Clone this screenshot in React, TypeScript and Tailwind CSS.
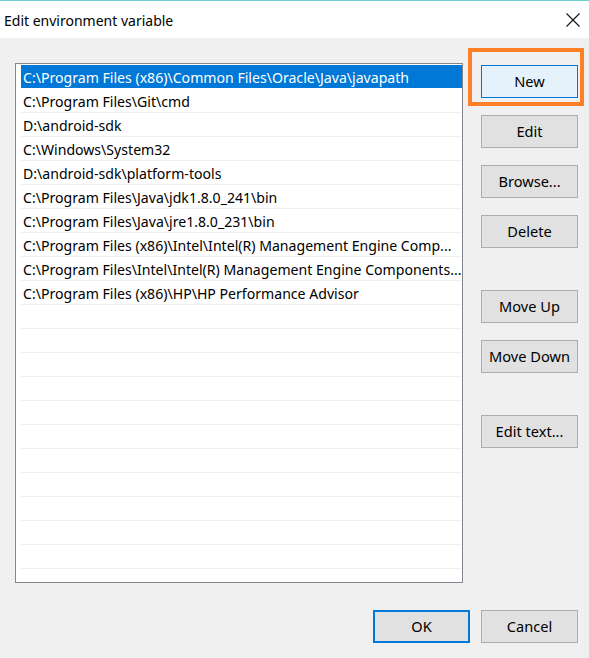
const paths = [
  'C:\\Program Files (x86)\\Common Files\\Oracle\\Java\\javapath',
  'C:\\Program Files\\Git\\cmd',
  'D:\\android-sdk',
  'C:\\Windows\\System32',
  'D:\\android-sdk\\platform-tools',
  'C:\\Program Files\\Java\\jdk1.8.0_241\\bin',
  'C:\\Program Files\\Java\\jre1.8.0_231\\bin',
  'C:\\Program Files (x86)\\Intel\\Intel(R) Management Engine Comp...',
  'C:\\Program Files\\Intel\\Intel(R) Management Engine Components...',
  'C:\\Program Files (x86)\\HP\\HP Performance Advisor',
];

const rows = [...paths, ...Array(12).fill('')];

function Btn({ label, className = '' }: { label: string; className?: string }) {
  return (
    <button
      className={`w-[97px] h-[33px] border border-[#adadad] bg-[#e1e1e1] text-[14.6px] text-black ${className}`}
    >
      {label}
    </button>
  );
}

export default function App() {
  return (
    <div
      className="w-[589px] h-[658px] bg-[#f0f0f0] flex flex-col overflow-hidden"
      style={{ fontFamily: '"Noto Sans", "Open Sans", sans-serif' }}
    >
      {/* Title bar */}
      <div className="h-[38px] bg-white border-t border-[#6fcfd0] flex items-center justify-between pl-[4px] pr-[9px]">
        <span className="text-[14px] text-black mt-[2px]">Edit environment variable</span>
        <svg width="14" height="14" viewBox="0 0 14 14" className="mt-[1px]">
          <path d="M0.5 0.5 L13.5 13.5 M13.5 0.5 L0.5 13.5" stroke="#111" strokeWidth="1.1" />
        </svg>
      </div>

      <div className="flex">
        {/* List */}
        <div className="ml-[15px] mt-[25px] w-[448px] h-[520px] border border-[#828790] bg-white pl-[5px] pt-[1px] overflow-hidden">
          {rows.map((p, i) => (
            <div
              key={i}
              className={`h-[24px] flex items-center pl-[2px] pt-[2px] whitespace-nowrap overflow-hidden text-[14.1px] border-b ${
                i === 0 ? 'bg-[#0078d7] text-white border-white' : 'text-black border-[#f0f0f0]'
              }`}
            >
              {p}
            </div>
          ))}
        </div>

        {/* Buttons */}
        <div className="ml-[18px] mt-[27px] flex flex-col">
          <div className="relative">
            <div className="absolute -left-[13px] -right-[6px] -top-[17px] -bottom-[8px] border-4 border-[#ff7f27]" />
            <Btn label="New" className="relative !bg-[#e5f1fb] !border-[#0078d7]" />
          </div>
          <Btn label="Edit" className="mt-[17px]" />
          <Btn label="Browse..." className="mt-[17px]" />
          <Btn label="Delete" className="mt-[17px]" />
          <Btn label="Move Up" className="mt-[42px]" />
          <Btn label="Move Down" className="mt-[17px]" />
          <Btn label="Edit text..." className="mt-[42px]" />
        </div>
      </div>

      {/* Footer */}
      <div className="flex justify-end gap-[11px] pr-[11px] mt-[27px]">
        <Btn label="OK" className="!border-2 !border-[#0078d7]" />
        <Btn label="Cancel" />
      </div>
    </div>
  );
}
